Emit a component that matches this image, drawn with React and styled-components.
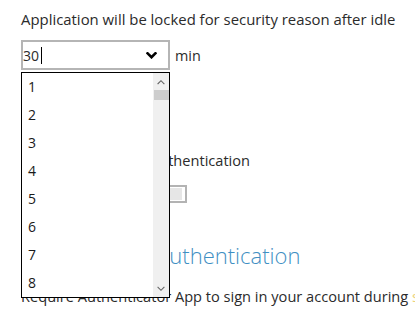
import React from "react";
import styled, { createGlobalStyle } from "styled-components";

const Global = createGlobalStyle`
  html, body { margin: 0; padding: 0; background: #fff; }
  body { font-family: "Open Sans", "Noto Sans", sans-serif; color: #2b2b2b; }
  #root { width: 415px; height: 315px; overflow: hidden; }
`;

const Page = styled.div`
  padding: 9px 0 0 21px;
  display: flex;
  flex-direction: column;
  align-items: flex-start;
`;

const Text = styled.div`
  font-size: ${(p) => p.$size || 14.4}px;
  line-height: 20px;
  white-space: nowrap;
  margin-top: ${(p) => p.$mt || 0}px;
`;

const Accent = styled.span`
  color: #ecd27a;
`;

const Row = styled.div`
  display: flex;
  align-items: center;
  gap: 5px;
  margin-top: ${(p) => p.$mt || 0}px;
`;

const SelectWrap = styled.div`
  position: relative;
  width: 149px;
`;

const SelectBox = styled.div`
  box-sizing: border-box;
  width: 149px;
  height: 30px;
  border: 2px solid #b5b5b5;
  display: flex;
  align-items: center;
  justify-content: space-between;
  padding: 0 11px 0 0;
  font-size: 14px;
  background: #fff;
`;

const Value = styled.span`
  display: flex;
  align-items: center;
  &::after {
    content: "";
    width: 1px;
    height: 17px;
    background: #000;
    margin-left: 2px;
  }
`;

const Dropdown = styled.div`
  position: absolute;
  top: 32px;
  left: 0;
  box-sizing: border-box;
  width: 149px;
  height: 226px;
  border: 1px solid #000;
  background: #fff;
  display: flex;
  overflow: hidden;
  z-index: 5;
`;

const List = styled.div`
  flex: 1;
  display: flex;
  flex-direction: column;
`;

const Item = styled.div`
  height: 28px;
  line-height: 28px;
  padding-left: 6px;
  font-size: 14px;
  color: #1a1a1a;
  flex-shrink: 0;
`;

const Scrollbar = styled.div`
  width: 16px;
  background: #f0f0f0;
  display: flex;
  flex-direction: column;
  align-items: stretch;
`;

const Arrow = styled.div`
  height: 17px;
  display: flex;
  align-items: center;
  justify-content: center;
`;

const Thumb = styled.div`
  height: 10px;
  background: #cdcdcd;
  margin-left: 1px;
`;

const Spacer = styled.div`
  flex: 1;
`;

const Unit = styled.span`
  font-size: 14.4px;
`;

const Switch = styled.div`
  box-sizing: border-box;
  width: 60px;
  height: 18px;
  border: 2px solid #b3b3b3;
  padding: 1px 3px 1px 1px;
  margin-top: 15px;
  margin-left: 106px;
  display: flex;
  &::before {
    content: "";
    flex: 1;
    background: #e6e6e6;
  }
`;

const Heading = styled.div`
  font-size: 22px;
  line-height: 32px;
  font-weight: 300;
  color: #3f8fc3;
  white-space: nowrap;
  margin-top: 36px;
  margin-left: 20px;
`;

const Chevron = ({ up, color = "#000", w = 12, h = 8, sw = 3 }) => (
  <svg width={w} height={h} viewBox="0 0 12 8">
    <polyline
      points={up ? "1.5,6.5 6,2 10.5,6.5" : "1.5,1.5 6,6 10.5,1.5"}
      fill="none"
      stroke={color}
      strokeWidth={sw}
      strokeLinecap="square"
    />
  </svg>
);

export default function App() {
  const items = [1, 2, 3, 4, 5, 6, 7, 8, 9];
  return (
    <>
      <Global />
      <Page>
        <Text $size={14.9}>Application will be locked for security reason after idle</Text>
        <Row $mt={11}>
          <SelectWrap>
            <SelectBox>
              <Value>30</Value>
              <Chevron w={11} h={7} />
            </SelectBox>
            <Dropdown>
              <List>
                {items.map((n) => (
                  <Item key={n}>{n}</Item>
                ))}
              </List>
              <Scrollbar>
                <Arrow>
                  <Chevron up color="#606060" w={8} h={6} sw={1.6} />
                </Arrow>
                <Thumb />
                <Spacer />
                <Arrow>
                  <Chevron color="#606060" w={8} h={6} sw={1.6} />
                </Arrow>
              </Scrollbar>
            </Dropdown>
          </SelectWrap>
          <Unit>min</Unit>
        </Row>
        <Text $mt={80} $size={14.6}>Enable Two-Factor Authentication</Text>
        <Switch />
        <Heading>Two-Factor Authentication</Heading>
        <Text $mt={15} $size={14.6}>
          Require Authenticator App to sign in your account during <Accent>sign in</Accent>
        </Text>
      </Page>
    </>
  );
}
